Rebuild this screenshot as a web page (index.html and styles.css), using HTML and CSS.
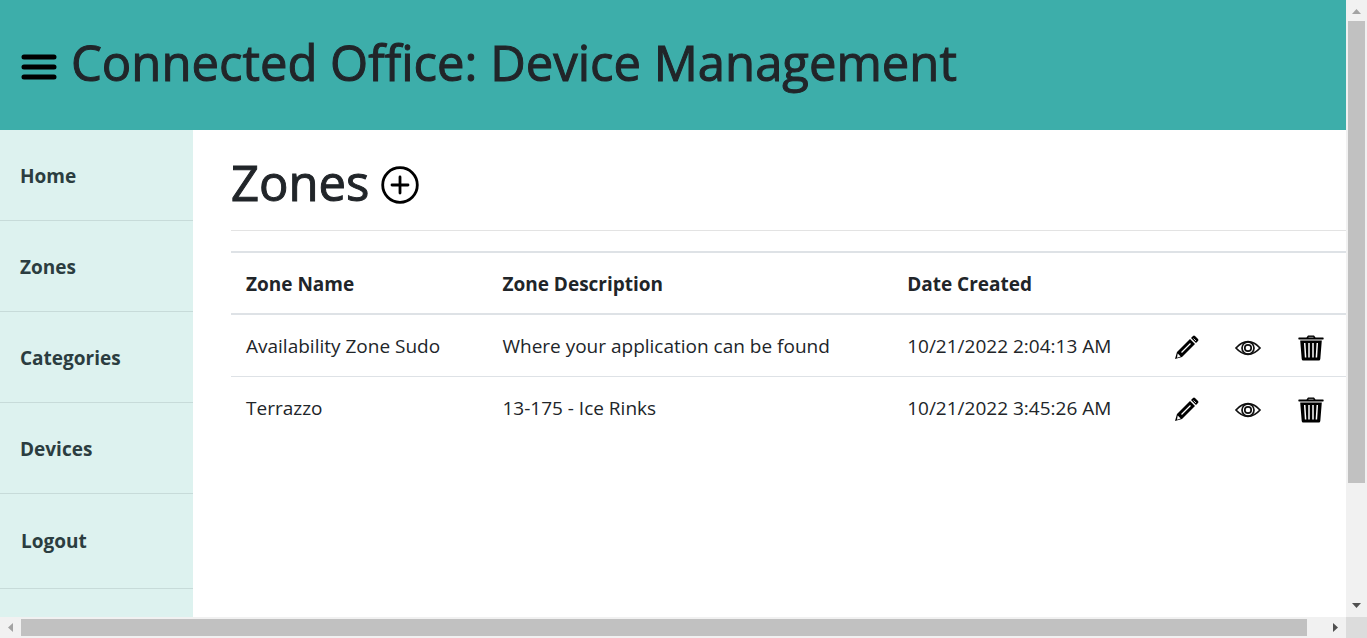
FILE: index.html
```html
<!DOCTYPE html>
<html lang="en">
<head>
<meta charset="utf-8">
<title>Zones - Connected Office</title>
<link rel="stylesheet" href="styles.css">
</head>
<body>
<svg class="sprite" aria-hidden="true">
  <symbol id="pencil" viewBox="0 0 26 26">
    <path d="M2 24l2-7L17 4l5 5L9 22z"/>
    <path d="M18 3l2-2q1-1 2 0l3 3q1 1 0 2l-2 2z"/>
    <path d="M4.700 18.500l3 3-3.700 1.200z" fill="#fff"/>
    <path d="M8.500 17.500l9-9" stroke="#fff" stroke-width="1.300"/>
    <path d="M20.500 3.500l2.500 2.500" stroke="#fff" stroke-width=".8"/>
  </symbol>
  <symbol id="eye" viewBox="0 0 26 26">
    <g fill="none" stroke="#111" stroke-width="1.700">
      <path d="M1 13Q6.500 6.700 13 6.700T25 13Q19.500 19.300 13 19.300T1 13z"/>
      <circle cx="13" cy="13" r="6"/>
      <circle cx="13" cy="13" r="3.200"/>
    </g>
  </symbol>
  <symbol id="trash" viewBox="0 0 26 26">
    <path d="M1 2.500h7.500L10 .5h6l1.500 2H25q.7 0 .7 1t-.7 1H1q-.7 0-.7-1t.7-1z"/>
    <path d="M2.200 5.500h21.600L22.300 24q-.1 1.500-1.500 1.500H5.200q-1.400 0-1.500-1.500z"/>
    <path d="M6.700 8l.9 14.500M11 8v14.500M15 8v14.500M19.300 8l-.9 14.500" stroke="#fff" stroke-width="1.500"/>
    <path d="M10.500 2.300h5" stroke="#888"/>
  </symbol>
</svg>
<div class="viewport">
  <div class="page">
    <header class="topbar">
      <button class="menu" aria-label="Toggle menu">
        <svg viewBox="0 0 36 28" width="36" height="28"><path d="M3 4h30M3 14h30M3 24h30" stroke="#000" stroke-width="5" stroke-linecap="round"/></svg>
      </button>
      <h1 class="title">Connected Office: Device Management</h1>
    </header>
    <div class="body">
      <nav class="sidebar">
        <a class="nav-item" href="#">Home</a>
        <a class="nav-item" href="#">Zones</a>
        <a class="nav-item" href="#">Categories</a>
        <a class="nav-item" href="#">Devices</a>
        <button class="nav-item logout">Logout</button>
      </nav>
      <main class="content">
        <div class="heading">
          <h2 class="title">Zones</h2>
          <a class="add" href="#" aria-label="Add zone">
            <svg viewBox="0 0 38 38" width="38" height="38"><g fill="none" stroke="#000" stroke-width="2.800"><circle cx="19" cy="19" r="17.300"/><path d="M19 11v16M11 19h16" stroke-linecap="round"/></g></svg>
          </a>
        </div>
        <table class="zones">
          <colgroup><col class="col-name"><col class="col-description"><col class="col-date"><col><col><col></colgroup>
          <thead>
            <tr><th>Zone Name</th><th>Zone Description</th><th>Date Created</th><th></th><th></th><th></th></tr>
          </thead>
          <tbody>
            <tr>
              <td>Availability Zone Sudo</td><td>Where your application can be found</td><td>10/21/2022 2:04:13 AM</td>
              <td><a class="action" href="#" aria-label="Edit"><svg><use href="#pencil"/></svg></a></td>
              <td><a class="action" href="#" aria-label="Details"><svg><use href="#eye"/></svg></a></td>
              <td><a class="action" href="#" aria-label="Delete"><svg><use href="#trash"/></svg></a></td>
            </tr>
            <tr>
              <td>Terrazzo</td><td>13-175 - Ice Rinks</td><td>10/21/2022 3:45:26 AM</td>
              <td><a class="action" href="#" aria-label="Edit"><svg><use href="#pencil"/></svg></a></td>
              <td><a class="action" href="#" aria-label="Details"><svg><use href="#eye"/></svg></a></td>
              <td><a class="action" href="#" aria-label="Delete"><svg><use href="#trash"/></svg></a></td>
            </tr>
          </tbody>
        </table>
      </main>
    </div>
  </div>
  <div class="scroll vertical">
    <svg class="arrow" viewBox="0 0 17 21"><path d="M4 14l4.500-5 4.500 5z" fill="#a3a3a3"/></svg>
    <div class="thumb"></div>
    <div class="rest"></div>
    <svg class="arrow" viewBox="0 0 17 21"><path d="M4 7l4.500 5L13 7z" fill="#505050"/></svg>
  </div>
  <div class="scroll horizontal">
    <svg class="arrow" viewBox="0 0 21 17"><path d="M13 4l-5 4.500 5 4.500z" fill="#a3a3a3"/></svg>
    <div class="thumb"></div>
    <div class="rest"></div>
    <svg class="arrow" viewBox="0 0 21 17"><path d="M8 4l5 4.500L8 13z" fill="#505050"/></svg>
  </div>
  <div class="corner"></div>
</div>
</body>
</html>
```
FILE: styles.css
```css
* { box-sizing: border-box; }
body {
  margin: 0;
  font-family: "Open Sans", "Noto Sans", sans-serif;
  font-size: 19px;
  line-height: 30px;
  color: #212529;
}
.sprite { display: none; }
.viewport {
  display: grid;
  grid-template-columns: minmax(0, 1fr) 21px;
  grid-template-rows: minmax(0, 1fr) 21px;
  height: 100vh;
}
.page { display: flex; flex-direction: column; overflow: hidden; background: #fff; }
.topbar {
  display: flex;
  align-items: center;
  gap: 14px;
  flex: none;
  padding: 32px 21px 38px;
  background: #3daeaa;
}
.menu { display: flex; padding: 10px 0 0; border: 0; background: none; }
.title {
  margin: 0;
  font-size: 49px;
  font-weight: 500;
  line-height: 60px;
  font-variant-ligatures: none;
  white-space: nowrap;
  -webkit-text-stroke: 1px currentColor;
}
.body { display: flex; flex: 1; min-height: 0; }
.sidebar { display: flex; flex-direction: column; flex: 0 0 193px; background: #ddf2ef; }
.nav-item {
  padding: 31px 20px 29px;
  border: 0;
  border-bottom: 1px solid #c7dbd9;
  background: none;
  color: #2b3d40;
  font: inherit;
  line-height: 30px;
  font-weight: 700;
  text-align: left;
  text-decoration: none;
}
.logout { padding: 32px 21px; }
.content { flex: 1; min-width: 0; padding: 22px 0 0 38px; }
.heading {
  display: flex;
  align-items: center;
  gap: 12px;
  margin-bottom: 20px;
  padding-bottom: 18px;
  border-bottom: 1px solid #e3e3e3;
}
.add { display: flex; padding-top: 6px; }
.zones { width: 100%; table-layout: fixed; border-collapse: separate; border-spacing: 0; }
.col-name { width: 23%; }
.col-description { width: 36.300%; }
.col-date { width: 23.800%; }
.zones th, .zones td { padding: 16px 0 15px 15px; text-align: left; white-space: nowrap; }
.zones th { border-top: 2px solid #dee2e6; border-bottom: 2px solid #dee2e6; padding-bottom: 14px; }
.zones td { border-bottom: 1px solid #dee2e6; }
.zones tbody tr:last-child td { border-bottom: 0; }
.action { display: flex; padding-top: 4px; }
.action svg { width: 26px; height: 26px; }
.scroll { display: flex; background: #f1f1f1; }
.vertical { flex-direction: column; padding: 0 2px; }
.horizontal { padding: 2px 0; }
.arrow { flex: 0 0 21px; }
.vertical .arrow { width: 17px; height: 21px; }
.horizontal .arrow { width: 21px; height: 17px; }
.thumb { background: #c1c1c1; }
.vertical .thumb { flex: 462; }
.vertical .rest { flex: 113; }
.horizontal .thumb { flex: 1286; }
.horizontal .rest { flex: 18; }
.corner { background: #dcdcdc; }
```
